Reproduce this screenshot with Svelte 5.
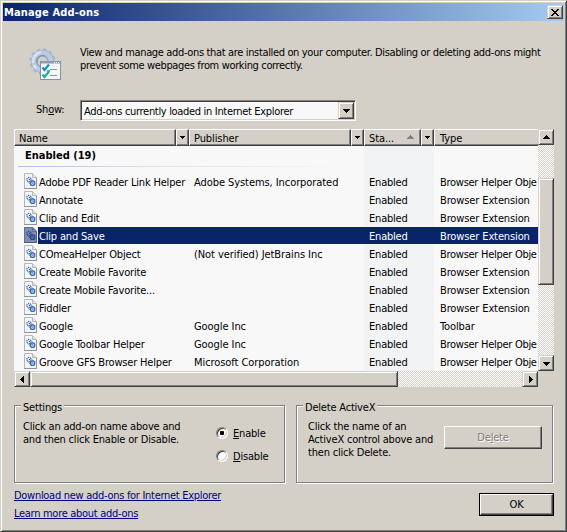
<script>
  const rows = [
    ['Adobe PDF Reader Link Helper', 'Adobe Systems, Incorporated', 'Browser Helper Obje'],
    ['Annotate', '', 'Browser Extension'],
    ['Clip and Edit', '', 'Browser Extension'],
    ['Clip and Save', '', 'Browser Extension'],
    ['COmeaHelper Object', '(Not verified) JetBrains Inc', 'Browser Helper Obje'],
    ['Create Mobile Favorite', '', 'Browser Extension'],
    ['Create Mobile Favorite...', '', 'Browser Extension'],
    ['Fiddler', '', 'Browser Extension'],
    ['Google', 'Google Inc', 'Toolbar'],
    ['Google Toolbar Helper', 'Google Inc', 'Browser Helper Obje'],
    ['Groove GFS Browser Helper', 'Microsoft Corporation', 'Browser Helper Obje'],
  ];
  let selected = $state(3);
  let mode = $state('enable');
</script>

{#snippet arrow(dir)}
  <svg class="arrow" width="7" height="7" viewBox="0 0 7 7" shape-rendering="crispEdges">
    {#if dir === 'up'}<path d="M3 1h1v1h1v1h1v1h1v1H0V4h1V3h1V2h1z" />
    {:else if dir === 'down'}<path d="M0 2h7v1H6v1H5v1H4v1H3V5H2V4H1V3H0z" />
    {:else if dir === 'left'}<path d="M5 0v7H4V6H3V5H2V4H1V3h1V2h1V1h1V0z" />
    {:else if dir === 'right'}<path d="M2 0v7h1V6h1V5h1V4h1V3H5V2H4V1H3V0z" />
    {:else}<path d="M1 2h5v1H5v1H4v1H3V4H2V3H1z" />{/if}
  </svg>
{/snippet}

<div class="window">
  <header class="title">
    <span>Manage Add-ons</span>
    <button class="close raised" aria-label="Close">
      <svg width="8" height="7" viewBox="0 0 8 7" shape-rendering="crispEdges"><path d="M0 0h2v1h1v1h2V1h1V0h2v1H7v1H6v1H5v1h1v1h1v1h1v1H6V6H5V5H3v1H2v1H0V6h1V5h1V4h1V3H2V2H1V1H0z" /></svg>
    </button>
  </header>

  <section class="intro">
    <svg class="gear" width="33" height="34" viewBox="0 0 33 34">
      <circle cx="13.500" cy="14.500" r="11.700" fill="none" stroke="#a9bad0" stroke-width="3" stroke-dasharray="3.600 2.520" />
      <circle cx="13.500" cy="14.500" r="8.200" fill="none" stroke="#8ca4c4" stroke-width="6.500" />
      <circle cx="13.200" cy="14.200" r="8.700" fill="none" stroke="#bccbdd" stroke-width="4.600" />
      <path d="M4 16a10 10 0 0 1 8-11M7 21a10 10 0 0 1-2-3" fill="none" stroke="#dce5ee" stroke-width="2" />
      <path d="M8 16a6 6 0 0 1 8-7" fill="none" stroke="#7791b6" />
      <rect x="11.500" y="14.500" width="20" height="18" fill="#f5f7f9" stroke="#8592a3" />
      <path d="M12 15.500h19" stroke="#929dab" stroke-width="2" />
      <path d="M25 15.500h1m1 0h1m1 0h1" stroke="#fff" />
      <path d="M21 22.500h7M21 28.500h7" stroke="#8995a4" />
      <path d="M13.500 20.500l2 2.500 4.500-5.500" fill="none" stroke="#2889b5" stroke-width="2.200" />
      <path d="M13.500 27.500l2 2.500 4.500-5.500" fill="none" stroke="#28a8a0" stroke-width="2.200" />
      <path d="M18 24h3" stroke="#20d070" stroke-width="2" />
    </svg>
    <p>View and manage add-ons that are installed on your computer. Disabling or deleting add-ons might<br />prevent some webpages from working correctly.</p>
  </section>

  <div class="show">
    <label for="show">Sh<u>o</u>w:</label>
    <div class="combo" id="show">
      <span>Add-ons currently loaded in Internet Explorer</span>
      <button class="raised" aria-label="Open">{@render arrow('down')}</button>
    </div>
  </div>

  <div class="list">
    <div class="main">
      <div class="heads">
        <div class="head name">Name</div><div class="head drop">{@render arrow('small')}</div>
        <div class="head name">Publisher</div><div class="head drop">{@render arrow('small')}</div>
        <div class="head status">Sta...<i>{@render arrow('up')}</i></div><div class="head drop">{@render arrow('small')}</div>
        <div class="head type">Type</div>
      </div>
      <div class="body">
        <div class="group">Enabled (19)</div>
        {#each rows as [name, publisher, type], i}
          <!-- svelte-ignore a11y_click_events_have_key_events, a11y_no_static_element_interactions -->
          <div class="row" class:selected={selected === i} onclick={() => (selected = i)}>
            <svg class="doc" width="14" height="16" viewBox="0 0 14 16">
              <path d="M.5 .5h8l4 4v11H.5z" fill="#f3f5f6" stroke="#b4b8bb" />
              <path d="M8.500 .5v4h4" fill="#e2e4e5" stroke="#b4b8bb" />
              <path d="M12.500 5v10.500H0" fill="none" stroke="#8c959e" />
              <circle cx="4.900" cy="6.500" r="2.100" fill="#dce8f6" stroke="#4d74ae" stroke-width="1.300" stroke-dasharray="1.300 .7" />
              <path d="M6.200 5l3.400 3.200M3.800 8.600l3.200 3.200" stroke="#5578ac" stroke-dasharray="1.500 .7" />
              <circle cx="8.600" cy="10.200" r="2.300" fill="#a9c8ec" stroke="#3a67ad" stroke-width="1.100" />
              <path d="M5 6.500h1M8 9.500l1 1" stroke="#2a4f90" />
              {#if selected === i}<path d="M0 0h9l4 4v12H0z" fill="#0a246a" opacity=".5" />{/if}
            </svg>
            <div class="cells">
              <span class="c1">{name}</span><span class="c2">{publisher}</span><span class="c3">Enabled</span><span class="c4" class:clipped={type.endsWith('Obje')}>{type}</span>
            </div>
          </div>
        {/each}
      </div>
      <div class="track hbar">
        <button class="raised" aria-label="Left">{@render arrow('left')}</button>
        <div class="raised hthumb"></div>
        <button class="raised end" aria-label="Right">{@render arrow('right')}</button>
      </div>
    </div>
    <div class="side">
      <div class="track vbar">
        <button class="raised" aria-label="Up">{@render arrow('up')}</button>
        <div class="raised vthumb"></div>
        <button class="raised end" aria-label="Down">{@render arrow('down')}</button>
      </div>
    </div>
  </div>

  <div class="panels">
    <section class="panel settings">
      <h2>Settings</h2>
      <p>Click an add-on name above and<br />and then click Enable or Disable.</p>
      <div class="radios">
        <label><input type="radio" bind:group={mode} value="enable" /><span><u>E</u>nable</span></label>
        <label><input type="radio" bind:group={mode} value="disable" /><span><u>D</u>isable</span></label>
      </div>
    </section>
    <section class="panel activex">
      <h2>Delete ActiveX</h2>
      <p>Click the name of an<br />ActiveX control above and<br />then click Delete.</p>
      <button class="raised delete" disabled>De<u>l</u>ete</button>
    </section>
  </div>

  <footer>
    <nav>
      <a href="#download">Download new add-ons for Internet Explorer</a>
      <a href="#more">Learn more about add-ons</a>
    </nav>
    <div class="ok"><button class="raised">OK</button></div>
  </footer>
</div>

<style>
  :global(body) { overflow: hidden; }
  * { box-sizing: border-box; }
  .window {
    width: 567px; height: 532px; padding: 1px; background: #d4d0c8; color: #000;
    border: 1px solid; border-color: #d4d0c8 #404040 #404040 #d4d0c8;
    box-shadow: inset 1px 1px #fff, inset -1px -1px #808080;
    font: 11px/13px "DejaVu Sans Condensed", "DejaVu Sans", sans-serif; font-stretch: condensed;
    letter-spacing: -0.2px; white-space: nowrap; display: flex; flex-direction: column;
  }
  p, h2 { margin: 0; font-weight: 400; font-size: 11px; }
  u { text-underline-offset: 1px; text-decoration-thickness: 1px; }
  button { font: inherit; letter-spacing: inherit; color: #000; padding: 0; margin: 0; border-radius: 0; }
  .raised {
    background: #d4d0c8; border: 1px solid; border-color: #d4d0c8 #404040 #404040 #d4d0c8;
    box-shadow: inset 1px 1px #fff, inset -1px -1px #808080;
    display: flex; align-items: center; justify-content: center; flex: none;
  }
  .arrow { display: block; flex: none; }
  .title {
    margin: 1px 1px 0; height: 18px; padding: 0 1px 0 1px; display: flex; align-items: center; justify-content: space-between;
    background: linear-gradient(90deg, #0a246a, #a6caf0); color: #fff; font-weight: 700; letter-spacing: 0.15px;
  }
  .close { width: 16px; height: 14px; }
  .intro { display: flex; padding: 24px 0 0 27px; height: 79px; letter-spacing: -0.35px; }
  .gear { margin-top: 2px; flex: none; }
  .intro p { margin: 1px 0 0 18px; }
  .show { display: flex; height: 21px; align-items: center; padding-left: 34px; }
  .show label { width: 44px; margin-top: -3px; }
  .combo {
    width: 276px; height: 21px; background: #f8f8f8; border: 1px solid; border-color: #808080 #fff #fff #808080;
    box-shadow: inset 1px 1px #404040, inset -1px -1px #d4d0c8; padding: 1px 1px 1px 3px; letter-spacing: -0.32px;
    display: flex; align-items: center; justify-content: space-between;
  }
  .combo span { padding-top: 1px; }
  .combo button { width: 16px; height: 17px; }
  .list { display: flex; margin: 8px 0 0 12px; width: 540px; height: 258px; }
  .main { width: 524px; display: flex; flex-direction: column; }
  .heads { display: flex; height: 17px; }
  .head {
    background: #d4d0c8; border: 1px solid; border-color: #fff #404040 #404040 #fff; box-shadow: inset -1px -1px #808080;
    padding-left: 4px; height: 17px; line-height: 17px; flex: none; letter-spacing: -0.1px;
  }
  .name { width: 162px; }
  .drop { width: 13px; padding: 4px 0 0 2px; }
  .status { width: 57px; display: flex; }
  .status i { margin: 4px 0 0 auto; padding-right: 6px; fill: #808080; }
  .type { width: 104px; padding-left: 5px; border-right: 0; box-shadow: inset 0 -1px #808080; }
  .body { height: 225px; padding-left: 10px; background: linear-gradient(90deg, #f8f8f8 350px, #f1f3f5 350px 420px, #f8f8f8 420px); }
  .group {
    height: 27px; margin-left: -6px; padding: 3px 0 0 7px; font-weight: 700; font-size: 11px; letter-spacing: 0;
    background: linear-gradient(90deg, #a6c4e6, #d5e2f0 25%, #f1f4f6 55%, transparent 66%) 0 20px / 100% 1px no-repeat;
  }
  .row { display: flex; height: 18px; }
  .doc { flex: none; }
  .cells { display: flex; height: 17px; line-height: 19px; width: 500px; padding-left: 1px; }
  .cells span { flex: none; }
  .c1 { width: 155px; letter-spacing: -0.18px; }
  .c2 { width: 175px; letter-spacing: -0.07px; }
  .c3 { width: 71px; }
  .c4 { letter-spacing: -0.12px; }
  .clipped { letter-spacing: -0.28px; }
  .selected .cells { background: #0a246a; color: #fff; }
  .track { background: repeating-conic-gradient(#fff 0 25%, #d4d0c8 0 50%) 0 0 / 2px 2px; display: flex; }
  .track button { width: 16px; height: 16px; }
  .hbar { height: 16px; }
  .hthumb { width: 368px; height: 16px; }
  .hbar .end { margin-left: auto; }
  .vbar { flex-direction: column; width: 16px; height: 242px; }
  .vthumb { width: 16px; height: 107px; margin-top: 33px; }
  .vbar .end { margin-top: auto; }
  .panels { display: flex; gap: 11px; margin: 18px 0 0 12px; }
  .panel {
    height: 78px; border: 1px solid #808080; box-shadow: 1px 1px #fff, inset 1px 1px #fff;
    display: grid; grid-template-rows: 14px 1fr; align-content: start; padding-left: 8px;
  }
  .settings { width: 271px; grid-template-columns: 193px 1fr; }
  .activex { width: 257px; grid-template-columns: 139px 1fr; }
  h2 { grid-column: 1 / -1; justify-self: start; background: #d4d0c8; margin: -6px 0 0 -2px; padding: 0 2px; height: 14px; line-height: 15px; }
  .activex p { margin-left: 3px; }
  .radios { padding-top: 7px; display: flex; flex-direction: column; gap: 10px; }
  .radios label { display: flex; gap: 5px; height: 13px; }
  input {
    appearance: none; margin: 0; width: 12px; height: 12px; border-radius: 50%; background: #f8f8f8;
    border: 1px solid; border-color: #808080 #fff #fff #808080; box-shadow: inset 1px 1px #404040, inset -1px -1px #d4d0c8;
  }
  input:checked { background: radial-gradient(circle, #000 0 2px, #f8f8f8 2.500px); }
  .delete { width: 98px; height: 23px; margin: 6px 0 0; color: #808080; text-shadow: 1px 1px #fff; border-color: #fff #404040 #404040 #fff; box-shadow: inset -1px -1px #808080; }
  footer { display: flex; justify-content: space-between; padding: 6px 11px 0 12px; }
  nav { display: flex; flex-direction: column; gap: 5px; letter-spacing: -0.29px; }
  a { color: #000080; text-underline-offset: 1px; }
  .ok { border: 1px solid #000; margin-top: 4px; width: 75px; height: 23px; }
  .ok button { width: 73px; height: 21px; border-color: #fff #404040 #404040 #fff; box-shadow: inset -1px -1px #808080; }
</style>
